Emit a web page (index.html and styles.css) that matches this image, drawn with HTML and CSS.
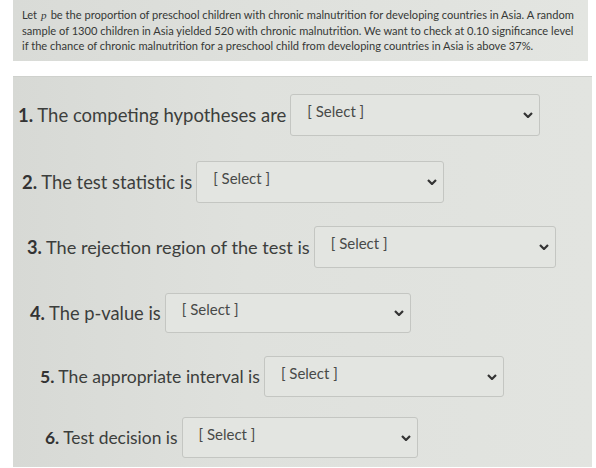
FILE: index.html
```html
<!DOCTYPE html>
<html>
<head>
<meta charset="utf-8">
<link rel="stylesheet" href="styles.css">
</head>
<body>
<div class="intro">
  <p>Let<i class="var">p</i>be the proportion of preschool children with chronic malnutrition for developing countries in Asia. A random sample of 1300 children in Asia yielded 520 with chronic malnutrition. We want to check at 0.10 significance level if the chance of chronic malnutrition for a preschool child from developing countries in Asia is above 37%.</p>
</div>
<div class="quiz">
  <div class="row q1"><span class="label"><b>1.</b> The competing hypotheses are</span><div class="select"><span>[ Select ]</span><svg class="chev" viewBox="0 0 10 6"><path d="M1 1 L5 5 L9 1"/></svg></div></div>
  <div class="row q2"><span class="label"><b>2.</b> The test statistic is</span><div class="select"><span>[ Select ]</span><svg class="chev" viewBox="0 0 10 6"><path d="M1 1 L5 5 L9 1"/></svg></div></div>
  <div class="row q3"><span class="label"><b>3.</b> The rejection region of the test is</span><div class="select"><span>[ Select ]</span><svg class="chev" viewBox="0 0 10 6"><path d="M1 1 L5 5 L9 1"/></svg></div></div>
  <div class="row q4"><span class="label"><b>4.</b> The p-value is</span><div class="select"><span>[ Select ]</span><svg class="chev" viewBox="0 0 10 6"><path d="M1 1 L5 5 L9 1"/></svg></div></div>
  <div class="row q5"><span class="label"><b>5.</b> The appropriate interval is</span><div class="select"><span>[ Select ]</span><svg class="chev" viewBox="0 0 10 6"><path d="M1 1 L5 5 L9 1"/></svg></div></div>
  <div class="row q6"><span class="label"><b>6.</b> Test decision is</span><div class="select"><span>[ Select ]</span><svg class="chev" viewBox="0 0 10 6"><path d="M1 1 L5 5 L9 1"/></svg></div></div>
</div>
</body>
</html>
```
FILE: styles.css
```css
html, body {
  margin: 0;
  padding: 0;
  background: #ffffff;
}
body {
  width: 596px;
  height: 468px;
  overflow: hidden;
  font-family: Lato, "Open Sans", sans-serif;
  color: #3b3d3b;
}
.intro {
  margin: 0 8px 0 13px;
  height: 61px;
  box-sizing: border-box;
  padding: 7px 12px 0 9px;
  background: linear-gradient(90deg, #d9dbd7 0%, #dfe1dd 50%, #e3e5e1 100%);
}
.intro p {
  margin: 0;
  font-size: 11.1px;
  line-height: 15.5px;
  color: #363836;
}
.intro .var {
  font-family: "Liberation Serif", serif;
  font-size: 1em;
  line-height: 1;
  margin: 0 4px 0 4px;
}
.quiz {
  margin: 15px 4px 0 13px;
  height: 391px;
  box-sizing: border-box;
  padding-top: 17px;
  border-top: 1px solid #cfd1cd;
  background: linear-gradient(90deg, #d7d9d5 0%, #dfe1dd 40%, #e2e4e0 100%);
  display: flex;
  flex-direction: column;
}
.row {
  display: flex;
  align-items: center;
  gap: 4px;
}
.label {
  white-space: nowrap;
  color: #3c3e3c;
}
.label b {
  font-weight: 700;
  color: #333;
}
.select {
  box-sizing: border-box;
  height: 42px;
  border: 1px solid #c4c6c2;
  border-radius: 3px;
  background: #e3e5e1;
  display: flex;
  align-items: center;
  justify-content: space-between;
  padding: 0 6px 0 16px;
  color: #484a48;
  font-size: 15px;
}
.select span {
  margin-top: -8px;
}
.chev {
  width: 10px;
  height: 6px;
  fill: none;
  stroke: #333;
  stroke-width: 2.2;
}
.q1 { padding-left: 5px; font-size: 18.5px; }
.q1 .select { width: 250px; }
.q2 { padding-left: 9px; margin-top: 25px; font-size: 18.4px; }
.q2 .select { width: 248px; }
.q3 { padding-left: 14px; margin-top: 23px; font-size: 18.2px; }
.q3 .select { width: 242px; }
.q4 { padding-left: 17px; margin-top: 25px; font-size: 18.3px; }
.q4 .select { width: 246px; height: 40px; }
.q5 { padding-left: 27px; margin-top: 23px; font-size: 17.6px; }
.q5 .select { width: 240px; height: 41px; }
.q6 { padding-left: 32px; margin-top: 20px; font-size: 17.4px; }
.q6 .select { width: 236px; height: 41px; }
```
